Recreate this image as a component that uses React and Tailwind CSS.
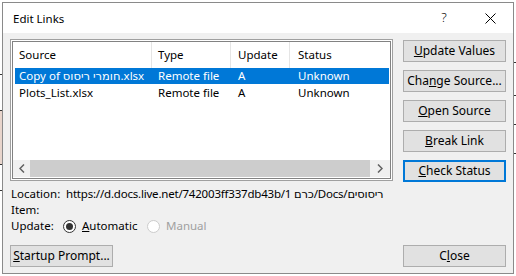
const font = { fontFamily: '"Segoe UI", "Noto Sans", "DejaVu Sans", sans-serif' }

function Btn({ children, primary, className = '' }) {
  return (
    <div
      className={`h-[22px] flex items-center justify-center bg-[#e1e1e1] text-[12px] text-black ${
        primary ? 'border-2 border-[#0078d7]' : 'border border-[#adadad]'
      } ${className}`}
    >
      {children}
    </div>
  )
}

const cols = [
  { label: 'Source', w: 'w-[137px]', pl: 'pl-[4px]' },
  { label: 'Type', w: 'w-[79px]', pl: 'pl-[6px]' },
  { label: 'Update', w: 'w-[59px]', pl: 'pl-[7px]' },
  { label: 'Status', w: 'flex-1', pl: 'pl-[8px]' },
]

const rows = [
  { source: 'Copy of חומרי ריסוס.xlsx', type: 'Remote file', update: 'A', status: 'Unknown', selected: true },
  { source: 'Plots_List.xlsx', type: 'Remote file', update: 'A', status: 'Unknown' },
]

function Radio({ checked, disabled, children }) {
  return (
    <div className={`flex items-center gap-[6px] ${disabled ? 'text-[#a0a0a0]' : 'text-black'}`}>
      <div
        className={`w-[13px] h-[13px] rounded-full border bg-white flex items-center justify-center ${
          disabled ? 'border-[#cccccc]' : 'border-[#333333]'
        }`}
      >
        {checked && <div className="w-[7px] h-[7px] rounded-full bg-[#333333]" />}
      </div>
      <span>{children}</span>
    </div>
  )
}

export default function App() {
  return (
    <div className="w-[516px] h-[276px] bg-white flex pt-[2px] overflow-hidden" style={font}>
      <div className="w-[2px] flex flex-col">
        <div className="h-[72px]" />
        <div className="h-[1px] bg-[#333]" />
        <div className="h-[35px]" />
        <div className="h-[1px] bg-[#333]" />
        <div className="h-[53px] bg-[#e8d5cc]" />
        <div className="h-[1px] bg-[#333]" />
        <div className="h-[25px]" />
        <div className="h-[1px] bg-[#333]" />
      </div>
      <div className="w-[512px] h-[272px] border border-[#8a8a8a] flex flex-col">
        {/* title bar */}
        <div className="h-[30px] bg-white flex items-center pl-[10px] text-[11.5px] text-black shrink-0">
          <span className="flex-1 pt-[2px]">Edit Links</span>
          <span className="w-[46px] text-center text-[13px] font-light">?</span>
          <span className="w-[46px] flex items-center justify-center">
            <svg width="11" height="11" viewBox="0 0 11 11">
              <path d="M0.5 0.5 L10.5 10.5 M10.5 0.5 L0.5 10.5" stroke="#000" strokeWidth="1" />
            </svg>
          </span>
        </div>

        {/* body */}
        <div className="flex-1 bg-[#f0f0f0] px-[7px] pt-[6px] text-[11.5px] text-black flex flex-col">
          <div className="flex gap-[10px]">
            {/* list */}
            <div className="w-[383px] h-[142px] border border-[#a0a0a0] p-[1px] bg-white">
              <div className="h-full border border-[#828282] bg-white flex flex-col pl-[2px] pr-[1px]">
                <div className="h-[26px] flex shrink-0">
                  {cols.map((c, i) => (
                    <div
                      key={c.label}
                      className={`${c.w} ${c.pl} flex items-center ${i < 3 ? 'border-r border-[#e5e5e5]' : ''}`}
                    >
                      {c.label}
                    </div>
                  ))}
                </div>
                {rows.map((r) => (
                  <div
                    key={r.source}
                    className={`h-[16px] flex items-center ${r.selected ? 'bg-[#0078d7] text-white' : ''} mb-[1px]`}
                  >
                    <div className="w-[137px] pl-[4px] whitespace-nowrap">{r.source}</div>
                    <div className="w-[79px] pl-[6px]">{r.type}</div>
                    <div className="w-[59px] pl-[7px]">{r.update}</div>
                    <div className="flex-1 pl-[8px]">{r.status}</div>
                  </div>
                ))}
                <div className="flex-1" />
                <div className="h-[17px] flex mb-[1px] -ml-[2px] -mr-[1px]">
                  <div className="w-[17px] bg-[#f0f0f0] flex items-center justify-center">
                    <svg width="6" height="9" viewBox="0 0 6 9">
                      <path d="M5 0.5 L1 4.5 L5 8.5" stroke="#606060" strokeWidth="1.5" fill="none" />
                    </svg>
                  </div>
                  <div className="flex-1 bg-[#cdcdcd]" />
                  <div className="w-[20px] bg-[#f0f0f0] flex items-center justify-center">
                    <svg width="6" height="9" viewBox="0 0 6 9">
                      <path d="M1 0.5 L5 4.5 L1 8.5" stroke="#606060" strokeWidth="1.5" fill="none" />
                    </svg>
                  </div>
                </div>
              </div>
            </div>

            {/* buttons */}
            <div className="w-[103px] flex flex-col gap-[8px] pt-[1px]">
              <Btn><span><u>U</u>pdate Values</span></Btn>
              <Btn><span>Cha<u>n</u>ge Source...</span></Btn>
              <Btn><span><u>O</u>pen Source</span></Btn>
              <Btn><span><u>B</u>reak Link</span></Btn>
              <Btn primary><span><u>C</u>heck Status</span></Btn>
            </div>
          </div>

          <div className="mt-[4px] flex flex-col">
            <div className="h-[16px] flex items-center">
              <span className="w-[56px] pl-[1px]">Location:</span>
              <span className="whitespace-nowrap tracking-[-0.2px]">https://d.docs.live.net/742003ff337db43b/1 כרם/Docs/ריסוסים</span>
            </div>
            <div className="h-[16px] flex items-center">
              <span className="pl-[1px]">Item:</span>
            </div>
            <div className="h-[16px] flex items-center">
              <span className="w-[53px] pl-[1px]">Update:</span>
              <div className="w-[84px]">
                <Radio checked><u>A</u>utomatic</Radio>
              </div>
              <Radio disabled>Manual</Radio>
            </div>
          </div>

          <div className="flex-1" />
          <div className="flex justify-between mb-[6px]">
            <Btn className="w-[103px]"><span><u>S</u>tartup Prompt...</span></Btn>
            <Btn className="w-[103px]"><span>C<u>l</u>ose</span></Btn>
          </div>
        </div>
      </div>
      <div className="w-[2px] flex flex-col">
        <div className="h-[60px]" />
        <div className="h-[1px] bg-[#333]" />
        <div className="h-[32px]" />
        <div className="h-[1px] bg-[#333]" />
        <div className="h-[28px]" />
        <div className="h-[1px] bg-[#333]" />
        <div className="h-[28px]" />
        <div className="h-[1px] bg-[#333]" />
      </div>
    </div>
  )
}
